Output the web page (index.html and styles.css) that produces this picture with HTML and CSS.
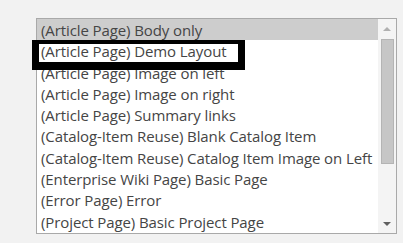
FILE: index.html
```html
<!DOCTYPE html>
<html>
<head>
<meta charset="utf-8">
<link rel="stylesheet" href="styles.css">
</head>
<body>
<div class="page">
  <div class="listbox">
    <ul class="options">
      <li class="option selected">(Article Page) Body only</li>
      <li class="option">(Article Page) Demo Layout</li>
      <li class="option">(Article Page) Image on left</li>
      <li class="option">(Article Page) Image on right</li>
      <li class="option">(Article Page) Summary links</li>
      <li class="option">(Catalog-Item Reuse) Blank Catalog Item</li>
      <li class="option">(Catalog-Item Reuse) Catalog Item Image on Left</li>
      <li class="option">(Enterprise Wiki Page) Basic Page</li>
      <li class="option">(Error Page) Error</li>
      <li class="option">(Project Page) Basic Project Page</li>
    </ul>
    <div class="scrollbar">
      <div class="arrow up"></div>
      <div class="track"><div class="thumb"></div></div>
      <div class="arrow down"></div>
    </div>
  </div>
  <div class="highlight"></div>
</div>
</body>
</html>
```
FILE: styles.css
```css
html, body {
  margin: 0;
  padding: 0;
}
body {
  background: #f2f2f2;
  width: 403px;
  height: 243px;
  overflow: hidden;
  font-family: "Open Sans", "Noto Sans", sans-serif;
}
.page {
  position: relative;
  padding: 18px 0 0 36px;
}
.listbox {
  width: 359px;
  height: 214px;
  border: 1px solid #a9a9a9;
  background: #fff;
  display: flex;
}
.options {
  list-style: none;
  margin: 0;
  padding: 0;
  flex: 1;
  overflow: hidden;
}
.option {
  height: 21.3px;
  line-height: 23.5px;
  padding-left: 4px;
  font-size: 15px;
  letter-spacing: -0.1px;
  color: #454545;
  white-space: nowrap;
}
.option.selected {
  background: #cdcdcd;
}
.scrollbar {
  width: 18px;
  background: #f4f4f4;
  display: flex;
  flex-direction: column;
  align-items: center;
}
.arrow {
  height: 20px;
  width: 100%;
  position: relative;
}
.arrow::after {
  content: "";
  position: absolute;
  left: 5px;
  top: 8px;
  border-left: 4px solid transparent;
  border-right: 4px solid transparent;
}
.arrow.up::after {
  border-bottom: 4px solid #b0b0b0;
}
.arrow.down::after {
  top: 9px;
  border-top: 4px solid #606060;
}
.track {
  flex: 1;
  width: 100%;
  display: flex;
  justify-content: center;
}
.thumb {
  width: 13px;
  height: 125px;
  background: #c6c6c6;
  border: 1px solid #b4b4b4;
  box-sizing: border-box;
}
.highlight {
  position: absolute;
  left: 32px;
  top: 40px;
  width: 213px;
  height: 30px;
  box-sizing: border-box;
  border-style: solid;
  border-color: #000;
  border-width: 4px 7px 8px 7px;
}
```
